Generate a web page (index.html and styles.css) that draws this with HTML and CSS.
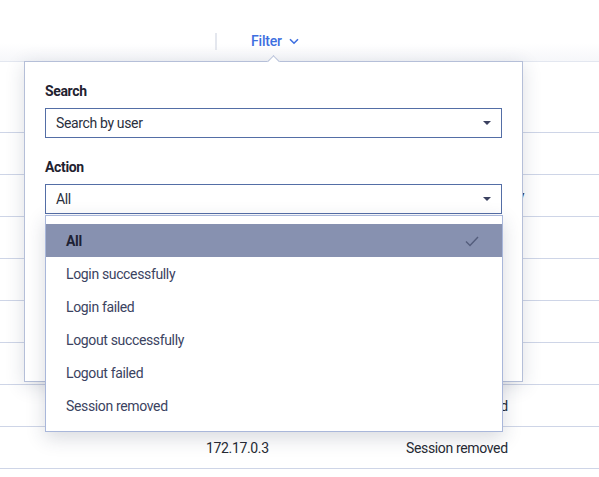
FILE: index.html
```html
<!DOCTYPE html>
<html lang="en">
<head>
<meta charset="utf-8">
<title>Audit log filter</title>
<link rel="stylesheet" href="styles.css">
</head>
<body>
<div class="page">
  <header class="toolbar">
    <span class="sep"></span>
    <button class="filter-btn" type="button">Filter
      <svg class="chev" width="10" height="7" viewBox="0 0 10 7"><path d="M1 1.2 L5 5.2 L9 1.2" fill="none" stroke="#3d6fe0" stroke-width="1.6"/></svg>
    </button>
  </header>

  <div class="rows">
    <div class="row first"><span class="ip">172.17.0.3</span><span class="act">Login successfully</span></div>
    <div class="row"><span class="ip">172.17.0.3</span><span class="act">Login successfully</span></div>
    <div class="row"><span class="ip">172.17.0.3</span><span class="act">Logout successfully</span></div>
    <div class="row"><span class="ip">172.17.0.3</span><span class="act">Login failed</span></div>
    <div class="row"><span class="ip">172.17.0.3</span><span class="act">Login successfully</span></div>
    <div class="row"><span class="ip">172.17.0.3</span><span class="act">Logout failed</span></div>
    <div class="row"><span class="ip">172.17.0.3</span><span class="act">Login failed</span></div>
    <div class="row"><span class="ip">172.17.0.3</span><span class="act">Session removed</span></div>
    <div class="row"><span class="ip">172.17.0.3</span><span class="act">Session removed</span></div>
  </div>

  <section class="filter-panel">
    <span class="caret"></span>
    <label class="field-label">Search</label>
    <div class="select">
      <span>Search by user</span>
      <span class="tri"></span>
    </div>
    <label class="field-label second">Action</label>
    <div class="select">
      <span>All</span>
      <span class="tri"></span>
    </div>
  </section>

  <ul class="menu">
    <li class="item selected"><span>All</span>
      <svg class="check" width="14" height="11" viewBox="0 0 14 11"><path d="M1 5.5 L5 9.5 L13 1" fill="none" stroke="#545d7c" stroke-width="1.4"/></svg>
    </li>
    <li class="item"><span>Login successfully</span></li>
    <li class="item"><span>Login failed</span></li>
    <li class="item"><span>Logout successfully</span></li>
    <li class="item"><span>Logout failed</span></li>
    <li class="item"><span>Session removed</span></li>
  </ul>
</div>
</body>
</html>
```

FILE: styles.css
```css
* { box-sizing: border-box; }
html, body { margin: 0; padding: 0; background: #fff; }
body {
  font-family: Roboto, "Noto Sans", "Liberation Sans", sans-serif;
  font-size: 14px;
  letter-spacing: -0.35px;
  color: #222;
  width: 599px;
  height: 477px;
  overflow: hidden;
}
.page { position: relative; width: 599px; height: 477px; }

.toolbar {
  height: 62px;
  border-bottom: 1px solid #e3e7f0;
  background: linear-gradient(#fff 70%, #f6f7fa);
  display: flex;
  align-items: flex-start;
  padding-top: 32px;
  padding-left: 215px;
}
.sep {
  width: 2px;
  height: 17px;
  background: #e4e7ee;
  margin-top: 1px;
}
.filter-btn {
  margin-left: 31px;
  border: 0;
  background: none;
  padding: 0 3px;
  font: 500 14px Roboto, "Noto Sans", sans-serif;
  letter-spacing: -0.2px;
  color: #3d6fe0;
  display: flex;
  align-items: center;
  gap: 7px;
  line-height: 18px;
}
.chev { margin-top: 1px; }

.rows { display: flex; flex-direction: column; }
.row {
  height: 42px;
  border-bottom: 1px solid #ced5e7;
  display: flex;
  align-items: center;
  color: #262a33;
}
.row.first { height: 71px; }
.ip { margin-left: 206px; width: 200px; }

.filter-panel {
  position: absolute;
  left: 24px;
  top: 61px;
  width: 499px;
  height: 321px;
  background: #fff;
  border: 1px solid #b5bfd8;
  box-shadow: 0 4px 18px rgba(40, 50, 80, 0.16);
  padding: 20px 20px;
  display: flex;
  flex-direction: column;
}
.caret {
  position: absolute;
  top: -5px;
  left: 244px;
  width: 9px;
  height: 9px;
  background: #fff;
  border-left: 1px solid #b5bfd8;
  border-top: 1px solid #b5bfd8;
  transform: rotate(45deg);
}
.field-label {
  font-weight: 700;
  font-size: 14px;
  line-height: 18px;
  color: #1f2230;
  margin-bottom: 8px;
}
.field-label.second { margin-top: 20px; }
.select {
  height: 30px;
  border: 1px solid #546ea6;
  display: flex;
  align-items: center;
  justify-content: space-between;
  padding: 0 10px 0 10px;
  color: #2a2f3d;
}
.tri {
  width: 0;
  height: 0;
  border-left: 4.5px solid transparent;
  border-right: 4.5px solid transparent;
  border-top: 4.5px solid #3b4160;
}

.menu {
  position: absolute;
  left: 45px;
  top: 215px;
  width: 458px;
  margin: 0;
  padding: 8px 0 9px;
  list-style: none;
  background: #fff;
  border: 1px solid #a9b7da;
  box-shadow: 0 6px 18px rgba(40, 50, 80, 0.18);
}
.item {
  height: 33px;
  display: flex;
  align-items: center;
  justify-content: space-between;
  padding: 0 23px 0 20px;
  color: #3b4361;
}
.item.selected {
  background: #8791b0;
  color: #1d2134;
  font-weight: 700;
}
.check { margin-top: 1px; }
```
